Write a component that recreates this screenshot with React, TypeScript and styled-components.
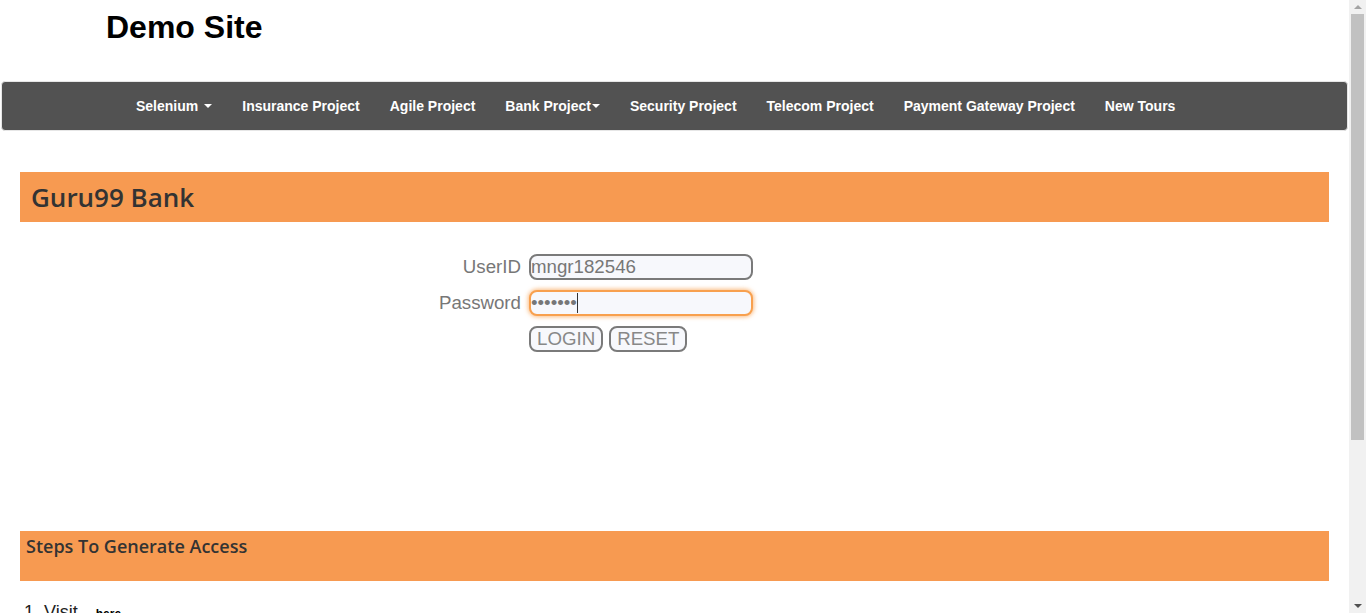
import React from "react";
import styled, { createGlobalStyle } from "styled-components";

const Global = createGlobalStyle`
  html, body { margin: 0; padding: 0; background: #fff; }
  body { font-family: "Liberation Sans", Arial, sans-serif; }
`;

const Shell = styled.div`
  display: flex;
  align-items: flex-start;
`;

const Page = styled.div`
  flex: 1;
  min-width: 0;
  display: flex;
  flex-direction: column;
  min-height: 833px;
`;

const ScrollRail = styled.div`
  position: sticky;
  top: 0;
  flex: 0 0 17px;
  height: 100vh;
  background: #f1f1f1;
  display: flex;
  flex-direction: column;
  align-items: center;
`;

const ScrollArrow = styled.div`
  flex: 0 0 14px;
  display: flex;
  align-items: center;
  justify-content: center;
  width: 100%;
`;

const ScrollThumb = styled.div`
  flex: 0 0 426px;
  width: 13px;
  background: #c1c1c1;
`;

const ScrollRest = styled.div`
  flex: 1;
`;

const Header = styled.header`
  height: 81px;
  padding-left: 106px;
  box-sizing: border-box;
`;

const SiteTitle = styled.h1`
  margin: 0;
  padding-top: 9px;
  font-family: "Liberation Sans", Arial, sans-serif;
  font-size: 32px;
  font-weight: 700;
  line-height: 36px;
  color: #000;
`;

const NavBar = styled.nav`
  margin: 0 1px;
  height: 50px;
  box-sizing: border-box;
  background: #525252;
  border: 1px solid #e6e6e6;
  border-radius: 4px;
  display: flex;
  align-items: center;
  padding-left: 119px;
`;

const NavItem = styled.a`
  display: flex;
  align-items: center;
  padding: 0 15px;
  color: #fff;
  font-family: "Liberation Sans", Arial, sans-serif;
  font-weight: 700;
  font-size: 14px;
  text-decoration: none;
  white-space: pre;
`;

const Caret = styled.span<{ $gap?: boolean }>`
  display: inline-block;
  width: 0;
  height: 0;
  margin-left: ${(p) => (p.$gap ? "6px" : "1px")};
  border-top: 4px solid #fff;
  border-left: 4px solid transparent;
  border-right: 4px solid transparent;
`;

const OrangeBar = styled.div<{ $tall?: boolean }>`
  margin: 0 20px;
  height: 50px;
  box-sizing: border-box;
  background: #f79a51;
  color: #333;
  display: flex;
  align-items: ${(p) => (p.$tall ? "flex-start" : "center")};
`;

const BankTitle = styled.h2`
  margin: 0;
  padding-left: 11px;
  font-family: "Open Sans", Lato, sans-serif;
  font-size: 26px;
  font-weight: 600;
  color: #333;
`;

const StepsTitle = styled.h3`
  margin: 0;
  padding: 3px 0 0 6px;
  font-family: "Open Sans", Lato, sans-serif;
  font-size: 18px;
  font-weight: 600;
  color: #333;
`;

const FirstGap = styled.div`
  height: 41px;
`;

const Form = styled.form`
  display: grid;
  grid-template-columns: 521px 224px;
  column-gap: 8px;
  row-gap: 10px;
  margin-top: 32px;
  align-items: center;
`;

const Label = styled.label`
  text-align: right;
  font-family: "Liberation Sans", Arial, sans-serif;
  font-size: 18.7px;
  color: #777;
`;

const Field = styled.div`
  position: relative;
  width: 224px;
  height: 26px;
`;

const Input = styled.input<{ $focused?: boolean }>`
  width: 224px;
  height: 26px;
  box-sizing: border-box;
  padding: 0 1px 0 0;
  margin: 0;
  border: 2px solid ${(p) => (p.$focused ? "#f8a04e" : "#7a7a7a")};
  border-radius: 8px;
  background: #f7f8fc;
  font-family: "Liberation Sans", Arial, sans-serif;
  font-size: 18.7px;
  color: #777;
  outline: none;
  caret-color: transparent;
  box-shadow: ${(p) => (p.$focused ? "0 0 4px 1px rgba(248,160,78,0.7)" : "none")};
`;

const FakeCaret = styled.span`
  position: absolute;
  left: 48px;
  top: 3px;
  width: 1px;
  height: 20px;
  background: #333;
  pointer-events: none;
`;

const Buttons = styled.div`
  display: flex;
  gap: 6px;
`;

const Button = styled.button`
  height: 26px;
  box-sizing: border-box;
  padding: 0 6px;
  border: 2px solid #7a7a7a;
  border-radius: 8px;
  background: #f7f8fc;
  font-family: "Liberation Sans", Arial, sans-serif;
  font-size: 18.7px;
  line-height: 20px;
  color: #888;
`;

const Spacer = styled.div`
  height: 179px;
`;

const Steps = styled.ol`
  margin: 18px 0 0 0;
  padding: 0 0 0 24px;
  list-style: none;
  font-family: "Liberation Sans", Arial, sans-serif;
  color: #222;
`;

const Step = styled.li`
  font-size: 18px;
  line-height: 26px;
  margin-bottom: 6px;
`;

const HereLink = styled.a`
  font-family: "Liberation Sans", Arial, sans-serif;
  font-size: 12px;
  font-weight: 700;
  color: #000;
  text-decoration: none;
  margin-left: 18px;
`;

const navItems: { label: string; caret?: "gap" | "tight" }[] = [
  { label: "Selenium", caret: "gap" },
  { label: "Insurance Project" },
  { label: "Agile Project" },
  { label: "Bank Project", caret: "tight" },
  { label: "Security Project" },
  { label: "Telecom Project" },
  { label: "Payment Gateway Project" },
  { label: "New Tours" },
];

export default function App() {
  return (
    <Shell>
      <Global />
      <Page>
        <Header>
          <SiteTitle>Demo Site</SiteTitle>
        </Header>
        <NavBar>
          {navItems.map((n) => (
            <NavItem key={n.label} href="#">
              {n.label}
              {n.caret && <Caret $gap={n.caret === "gap"} />}
            </NavItem>
          ))}
        </NavBar>
        <FirstGap />
        <OrangeBar>
          <BankTitle>Guru99 Bank</BankTitle>
        </OrangeBar>
        <Form onSubmit={(e) => e.preventDefault()}>
          <Label>UserID</Label>
          <Input type="text" defaultValue="mngr182546" />
          <Label>Password</Label>
          <Field>
            <Input type="password" defaultValue="abcdefg" $focused />
            <FakeCaret />
          </Field>
          <span />
          <Buttons>
            <Button type="submit">LOGIN</Button>
            <Button type="reset">RESET</Button>
          </Buttons>
        </Form>
        <Spacer />
        <OrangeBar $tall>
          <StepsTitle>Steps To Generate Access</StepsTitle>
        </OrangeBar>
        <Steps>
          <Step>
            1. Visit<HereLink href="#">here</HereLink>
          </Step>
          <Step>2. Enter your email id</Step>
          <Step>3. Login credentials are mailed to you</Step>
          <Step>4. Login credentials are only valid for 20 days!</Step>
        </Steps>
      </Page>
      <ScrollRail aria-hidden>
        <ScrollArrow>
          <svg width="8" height="4" viewBox="0 0 8 4">
            <polygon points="4,0 8,4 0,4" fill="#a3a3a3" />
          </svg>
        </ScrollArrow>
        <ScrollThumb />
        <ScrollRest />
        <ScrollArrow>
          <svg width="8" height="4" viewBox="0 0 8 4">
            <polygon points="0,0 8,0 4,4" fill="#505050" />
          </svg>
        </ScrollArrow>
      </ScrollRail>
    </Shell>
  );
}
